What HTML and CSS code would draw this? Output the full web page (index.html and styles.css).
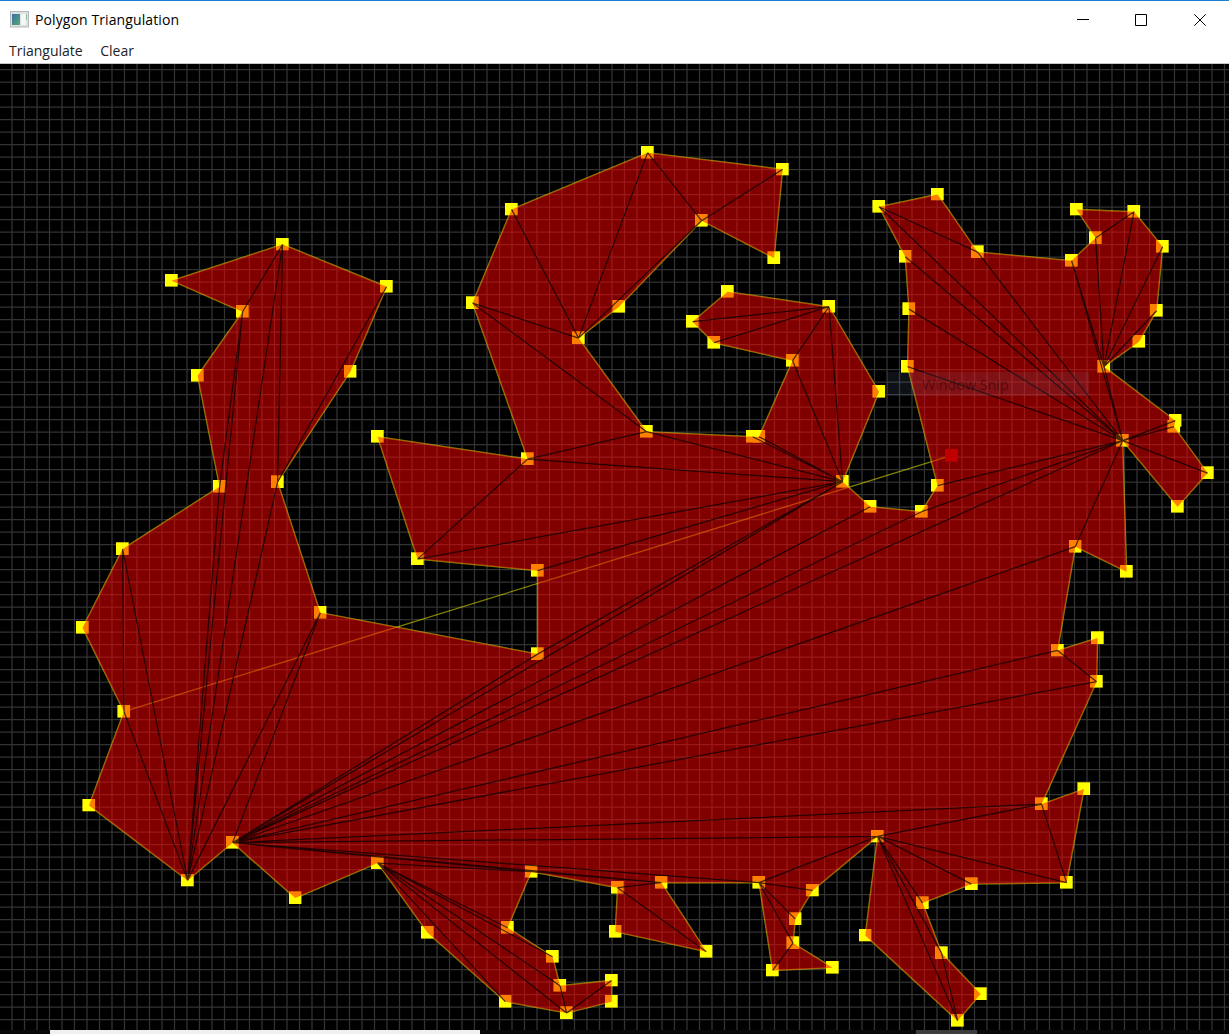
FILE: index.html
```html
<!DOCTYPE html>
<html lang="en">
<head>
<meta charset="utf-8">
<title>Polygon Triangulation</title>
<link rel="stylesheet" href="styles.css">
</head>
<body>
<div class="window">
  <header class="titlebar">
    <svg class="app-icon" width="19" height="17" viewBox="0 0 19 17">
      <defs><linearGradient id="screen" x1="0" y1="0" x2="1" y2="1"><stop offset="0" stop-color="#3b6ea0"/><stop offset="1" stop-color="#58a878"/></linearGradient></defs>
      <rect x="0.5" y="0.5" width="18" height="15.5" fill="#dfe2e3" stroke="#b4b8bb"/>
      <rect x="2" y="3" width="8" height="11" fill="url(#screen)"/>
      <rect x="11" y="3" width="5" height="11" fill="#f5f7f7"/>
      <rect x="16" y="3" width="1" height="6" fill="#8cc0a0"/>
    </svg>
    <span class="title">Polygon Triangulation</span>
    <div class="controls">
      <svg width="12" height="12" viewBox="0 0 12 12"><path d="M0 5.5H12" stroke="#000"/></svg>
      <svg width="12" height="12" viewBox="0 0 12 12"><path d="M.5 .5H11.5V11.5H.5Z" fill="none" stroke="#000"/></svg>
      <svg width="12" height="12" viewBox="0 0 12 12"><path d="M.3 .3L11.7 11.7M11.7 .3L.3 11.7" stroke="#000"/></svg>
    </div>
  </header>
  <nav class="menu"><span class="item">Triangulate</span><span class="item">Clear</span></nav>
  <main class="stage">
    <svg width="1229" height="966" viewBox="0 64 1229 966">
      <defs>
        <marker id="node" markerUnits="userSpaceOnUse" markerWidth="14" markerHeight="14" refX="6.6" refY="6.8" orient="0">
          <rect width="12.7" height="12.7" fill="#ff0"/>
        </marker>
      </defs>
      <path id="grid" class="grid"/>
      <polygon id="outline" class="outline"/>
      <path class="rubber" d="M123.7 711.6L951 455.6"/>
      <polygon id="fill" class="fill"/>
      <path id="diagonals" class="diagonals"/>
      <rect class="cursor" x="945" y="449" width="12.7" height="12.7"/>
    </svg>
    <div class="snip">Window Snip</div>
  </main>
  <footer class="strip"><div class="pale"></div><div class="dim"></div></footer>
</div>
<script src="app.js"></script>
</body>
</html>
```
FILE: styles.css
```css
body { margin: 0; background: #fff; font-family: "Open Sans", "Noto Sans", sans-serif; overflow: hidden; }
.window { width: 1229px; height: 1034px; display: flex; flex-direction: column; }
.titlebar { box-sizing: border-box; height: 39px; border-top: 1px solid #1a7fd4; display: flex; align-items: center; padding: 0 23px 0 10px; }
.app-icon { margin-top: -2px; }
.title { margin-left: 6px; padding-bottom: 2px; font-size: 14px; letter-spacing: 0.1px; color: #000; white-space: nowrap; }
.controls { display: flex; gap: 47px; margin-left: auto; }
.controls svg { display: block; }
.controls svg:first-child { margin-right: -1px; }
.menu { box-sizing: border-box; height: 25px; display: flex; gap: 17.5px; align-items: center; padding: 0 0 1px 9px; border-bottom: 1px solid #c8c8c8; }
.item { font-size: 14px; color: #222; white-space: nowrap; }
.stage { position: relative; height: 966px; background: #000; }
.stage svg { display: block; }
.grid { fill: none; stroke: #333; stroke-width: 1.25; }
.outline { fill: none; stroke: rgba(255, 255, 0, 0.5); stroke-width: 1.5; marker-start: url(#node); marker-mid: url(#node); }
.rubber { fill: none; stroke: rgba(255, 255, 0, 0.5); stroke-width: 1.3; }
.fill { fill: rgba(255, 0, 0, 0.5); }
.diagonals { fill: none; stroke: rgba(0, 0, 0, 0.7); stroke-width: 1.25; }
.cursor { fill: #c00000; }
.snip { position: absolute; left: 887px; top: 308px; width: 202px; height: 24px; box-sizing: border-box; padding-left: 35px; font-size: 14.3px; line-height: 25px; color: rgba(60, 0, 0, 0.6); background: rgba(130, 165, 200, 0.11); }
.strip { height: 4px; display: flex; background: #0a0a0a; }
.pale { width: 430px; margin-left: 50px; background: #f0f0f0; }
.dim { width: 61px; margin-left: 436px; background: #3c3c3c; }
```
FILE: app.js
```js
// Vertices in drawing order, each with its own id
const vertices = [
  ["1",171.3,280.3],["2",282.3,244],["3",386.3,286.3],["4",350,371.3],["5",277.3,481.7],["6",320,612.3],
  ["7",537.3,653.7],["8",537.3,570.3],["9",417.3,558.7],["10",377.3,436.3],["11",527.3,458.7],["12",472.3,302.7],
  ["13",511.3,209],["14",647.3,152.3],["15",782.3,169],["16",773.7,257.7],["17",701.3,220.3],["18",618.7,306.3],
  ["19",578.3,337.7],["20",646.3,431.3],["21",752.3,436.3],["21b",758.7,436.3],["22",792.3,360.3],["23",713.7,342.3],
  ["24",692.3,321.3],["25",727.3,291.3],["26",828.7,306.3],["27",878.7,391.3],["28",842.3,481.3],["29",870,506.3],
  ["30",921.3,511.3],["31",937.3,485.3],["32",907.3,366.3],["33",908.7,308.7],["34",905,256.3],["35",878.7,206.3],
  ["36",937.3,194],["37",977.3,251.7],["38",1071.3,260.3],["39",1095.3,237.7],["40",1076.3,209],["41",1133.7,211.3],
  ["42",1162.3,246.3],["43",1156.3,310.3],["44",1138.7,341.3],["45",1103.7,366.3],["46",1175,420.3],["46b",1173.7,426.3],
  ["47",1207.3,472.7],["48",1177.3,506.3],["49",1122.3,440.3],["50",1126.3,571.3],["51",1075,546.3],["52",1057.3,650],
  ["53",1097.3,637.7],["54",1096.3,681.3],["55",1041.3,803.7],["56",1083.7,788.7],["57",1066.3,882.3],["58",971.3,883.7],
  ["59",922.3,902.7],["60",941.3,952.7],["61",980.3,993.7],["62",957.3,1020.3],["63",865,935],["64",877.3,836],
  ["65",812.3,890],["66",795,918.7],["67",792.7,942.7],["68",832.3,967.3],["69",772.3,970],["70",758.7,882.3],
  ["71",661,882.3],["72",706,951.3],["73",615,931.3],["74",617.3,887.3],["75",531,871.3],["76",507.3,927.3],
  ["77",552.3,956.3],["78",559.7,985.3],["79",611.3,980],["80",611.3,1001.3],["81",566.3,1012.7],["82",505,1001.3],
  ["83",427.3,932.3],["84",377.3,862.7],["85",295,897.7],["86",232.3,842.3],["87",187.3,880],["88",88.7,805],
  ["89",123.7,711.3],["90",82.3,627.3],["91",122.3,548.7],["92",219.3,486.3],["93",197.3,375.3],["94",242.3,311.3]
];
// Each diagonal fan: hub id, then the ids that it reaches
const fans = {
  "2": "94 5", "3": "5", "87": "92 94 2 5 6 91 89", "94": "92", "91": "89",
  "86": "6 7 28 29 30 49 51 52 54 55 64 70 71 75",
  "84": "75 76 77 78 81 82", "81": "78 79", "71": "75 74", "74": "72",
  "70": "64 65 66 67", "69": "67", "64": "55 57 58 59 60 62", "60": "62", "55": "57",
  "52": "54", "49": "51 46 46b 47 45 38 37 35 34 33 32 31 30", "45": "38 39 41 42 43", "39": "41", "35": "37",
  "28": "26 22 21 21b 20 11 9 8 7", "26": "24 23 22", "11": "9 20", "12": "20 19", "19": "13 14 17", "17": "14 15"
};
const at = {};
for (const [id, x, y] of vertices) at[id] = [x + 0.3, y + 0.4].map(v => v.toFixed(1)).join(" ");
const ring = vertices.map(v => at[v[0]]).join(" ");
document.getElementById("outline").setAttribute("points", ring);
document.getElementById("fill").setAttribute("points", ring);
document.getElementById("diagonals").setAttribute("d",
  Object.entries(fans).map(([hub, ends]) => ends.split(" ").map(e => `M${at[hub]}L${at[e]}`).join("")).join(""));

let d = "";
for (let x = 12; x < 1229; x += 12.5) d += `M${x} 64V1030`;
for (let y = 69.5; y < 1030; y += 12.5) d += `M0 ${y}H1229`;
document.getElementById("grid").setAttribute("d", d);
```
